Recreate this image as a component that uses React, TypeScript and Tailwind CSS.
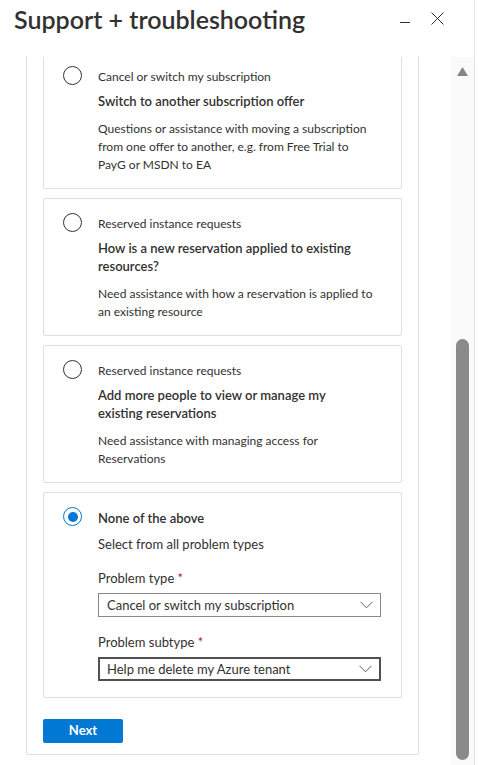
import React from 'react';

type Option = {
  category: string;
  title: string[];
  description: string[];
};

const options: Option[] = [
  {
    category: 'Cancel or switch my subscription',
    title: ['Switch to another subscription offer'],
    description: [
      'Questions or assistance with moving a subscription',
      'from one offer to another, e.g. from Free Trial to',
      'PayG or MSDN to EA',
    ],
  },
  {
    category: 'Reserved instance requests',
    title: ['How is a new reservation applied to existing', 'resources?'],
    description: ['Need assistance with how a reservation is applied to', 'an existing resource'],
  },
  {
    category: 'Reserved instance requests',
    title: ['Add more people to view or manage my', 'existing reservations'],
    description: ['Need assistance with managing access for', 'Reservations'],
  },
];

const Radio = ({ checked }: { checked?: boolean }) => (
  <div
    className={`mt-[-0.5px] flex h-[19px] w-[19px] shrink-0 items-center justify-center rounded-full border ${
      checked ? 'border-[#0078d4]' : 'border-[#323130]'
    }`}
  >
    {checked && <div className="h-[10px] w-[10px] rounded-full bg-[#0078d4]" />}
  </div>
);

const Chevron = () => (
  <svg width="13" height="8" viewBox="0 0 13 8" fill="none">
    <path d="M0.5 0.8 L6.5 6.8 L12.5 0.8" stroke="#605e5c" strokeWidth="1" />
  </svg>
);

const Dropdown = ({ value, focused }: { value: string; focused?: boolean }) => (
  <div
    className={`mt-[6px] flex h-[24px] w-[283px] items-center justify-between pl-2 pr-[7px] text-[13px] text-[#323130] ${
      focused ? 'border-2 border-[#505050] pl-[7px] pr-[6px]' : 'border border-[#8a8886]'
    }`}
  >
    <span>{value}</span>
    <Chevron />
  </div>
);

const OptionCard = ({ option }: { option: Option }) => (
  <div className="flex rounded-[2px] border border-[#e1dfdd] pl-[19px] pt-4 pb-[14px]">
    <div className="mt-[-1px] flex h-[18px] items-center">
      <Radio />
    </div>
    <div className="ml-4 text-[#323130]">
      <div className="text-[12px] leading-[18px]">{option.category}</div>
      <div className="mt-[6px] text-[13px] font-semibold leading-[18px]">
        {option.title.map((line) => (
          <div key={line}>{line}</div>
        ))}
      </div>
      <div className="mt-[10px] text-[12px] leading-[18px]">
        {option.description.map((line) => (
          <div key={line}>{line}</div>
        ))}
      </div>
    </div>
  </div>
);

export default function App() {
  return (
    <div
      className="flex h-[765px] w-[478px] overflow-hidden bg-white"
      style={{ fontFamily: 'Lato, "Noto Sans", sans-serif' }}
    >
      <div className="flex w-[475px] flex-col border-r border-[#e5e5e5]">
        {/* header */}
        <div className="flex h-[57px] shrink-0 items-start justify-between pl-[14px]">
          <h1 className="mt-[3px] text-[25px] font-semibold leading-[32px] text-[#323130]">
            Support + troubleshooting
          </h1>
          <div className="mr-[30px] mt-[12px] flex items-start gap-[20px]">
            <svg width="12" height="12" viewBox="0 0 12 12" className="mt-[2px]">
              <path d="M1 8.5 H11" stroke="#323130" strokeWidth="1" />
            </svg>
            <svg width="13" height="13" viewBox="0 0 13 13">
              <path d="M0.5 0.5 L12.5 12.5 M12.5 0.5 L0.5 12.5" stroke="#323130" strokeWidth="1" />
            </svg>
          </div>
        </div>

        <div className="flex min-h-0 flex-1">
          {/* scrolled content */}
          <div className="min-w-0 flex-1 overflow-hidden pl-[26px]">
            <div className="-mt-[23px] w-[393px] rounded-[2px] border border-[#e1dfdd] px-4 pt-4 pb-[11px]">
              <div className="flex flex-col gap-[9px]">
                {options.map((o, i) => (
                  <OptionCard key={i} option={o} />
                ))}

                <div className="flex rounded-[2px] border border-[#e1dfdd] pl-[19px] pt-4 pb-4">
                  <div className="mt-[-1px] flex h-[18px] items-center">
                    <Radio checked />
                  </div>
                  <div className="ml-4 text-[13px] leading-[18px] text-[#323130]">
                    <div className="font-semibold">None of the above</div>
                    <div className="mt-2">Select from all problem types</div>
                    <div className="mt-4">
                      Problem type <span className="text-[#a4262c]">*</span>
                    </div>
                    <Dropdown value="Cancel or switch my subscription" />
                    <div className="mt-4">
                      Problem subtype <span className="text-[#a4262c]">*</span>
                    </div>
                    <Dropdown value="Help me delete my Azure tenant" focused />
                  </div>
                </div>
              </div>

              <button className="mt-[21px] h-[24px] w-[80px] rounded-[2px] bg-[#0078d4] text-[13px] font-bold text-white">
                Next
              </button>
            </div>
          </div>

          {/* scrollbar */}
          <div className="relative w-[23px] shrink-0 bg-[#fafafa]">
            <svg width="11" height="9" viewBox="0 0 11 9" className="absolute left-[6px] top-[10px]">
              <path d="M5.5 0 L11 9 H0 Z" fill="#858585" />
            </svg>
            <div className="absolute left-[5px] top-[282px] h-[421px] w-[13px] rounded-full bg-[#8a8a8a]" />
          </div>
        </div>
      </div>
    </div>
  );
}
